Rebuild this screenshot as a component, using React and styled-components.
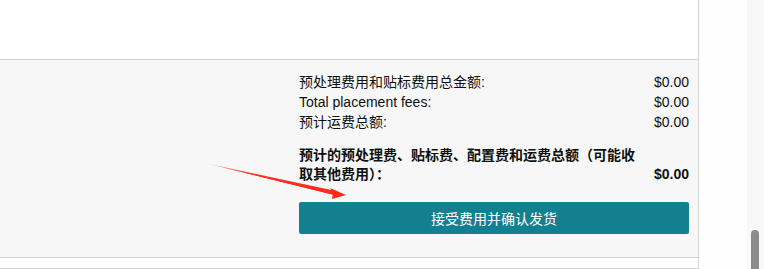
import React from 'react';
import styled, { createGlobalStyle } from 'styled-components';

const GlobalStyle = createGlobalStyle`
	html, body {
		margin: 0;
		padding: 0;
		background: #ffffff;
		overflow: hidden;
	}
	body {
		font-family: "Liberation Sans", "Noto Sans CJK SC", sans-serif;
		color: #0f1111;
	}
`;

const Page = styled.div`
	position: relative;
	display: flex;
	width: 764px;
	height: 269px;
	overflow: hidden;
`;

const Main = styled.div`
	width: 699px;
	display: flex;
	flex-direction: column;
`;

const Gutter = styled.div`
	flex: 1;
	display: flex;
	justify-content: flex-end;
	background: #fefefe;
`;

const Track = styled.div`
	width: 17px;
	background: #f8f8f8;
	display: flex;
	flex-direction: column;
	justify-content: flex-end;
	align-items: center;
`;

const Thumb = styled.div`
	width: 8px;
	height: 39px;
	margin-left: -1px;
	background: #8c8c8c;
	border-radius: 4px 4px 0 0;
`;

const TopCard = styled.div`
	height: 59px;
	background: #ffffff;
	border-right: 1px solid #d5d5d5;
	border-bottom: 1px solid #d5d5d5;
`;

const Summary = styled.div`
	height: 175px;
	background: #f7f7f7;
	border-right: 1px solid #d5d5d5;
	border-bottom: 1px solid #d5d5d5;
	padding: 12px 9px 12px 299px;
	box-sizing: content-box;
	display: flex;
	flex-direction: column;
`;

const Row = styled.div`
	display: flex;
	justify-content: space-between;
	align-items: flex-end;
	font-size: 14px;
	line-height: 20px;
	font-weight: ${p => (p.bold ? 700 : 400)};
	margin-top: ${p => p.gap || 0}px;
`;

const Label = styled.span`
	width: ${p => p.width || 'auto'};
	line-height: ${p => (p.bold ? '19px' : '20px')};
`;

const Amount = styled.span`
	white-space: nowrap;
`;

const Button = styled.button`
	margin-top: 18px;
	height: 32px;
	width: 100%;
	border: none;
	border-radius: 2px;
	background: #13808f;
	color: #ffffff;
	font-family: "Liberation Sans", "Noto Sans CJK SC", sans-serif;
	font-size: 14px;
	cursor: pointer;
`;

const Spacer = styled.div`
	height: 10px;
	background: #ffffff;
	border-right: 1px solid #d5d5d5;
`;

const NextCard = styled.div`
	flex: 1;
	background: #f7f7f7;
	border-top: 1px solid #d5d5d5;
	border-right: 1px solid #d5d5d5;
`;

const Arrow = styled.svg`
	position: absolute;
	left: 0;
	top: 0;
	pointer-events: none;
`;

const fees = [
	{ label: '预处理费用和贴标费用总金额:', amount: '$0.00' },
	{ label: 'Total placement fees:', amount: '$0.00' },
	{ label: '预计运费总额:', amount: '$0.00' },
];

export default function App() {
	return (
		<Page>
			<GlobalStyle />
			<Main>
				<TopCard />
				<Summary>
					{fees.map(f => (
						<Row key={f.label}>
							<Label>{f.label}</Label>
							<Amount>{f.amount}</Amount>
						</Row>
					))}
					<Row bold gap={14}>
						<Label bold width="340px">
							预计的预处理费、贴标费、配置费和运费总额（可能收取其他费用）：
						</Label>
						<Amount>$0.00</Amount>
					</Row>
					<Button>接受费用并确认发货</Button>
				</Summary>
				<Spacer />
				<NextCard />
			</Main>
			<Gutter>
				<Track>
					<Thumb />
				</Track>
			</Gutter>
			<Arrow width="764" height="269" viewBox="0 0 764 269">
				<defs>
					<linearGradient id="arrowFade" x1="205" y1="163" x2="345" y2="197" gradientUnits="userSpaceOnUse">
						<stop offset="0" stopColor="#ff2a1a" stopOpacity="0.1" />
						<stop offset="0.35" stopColor="#ff2a1a" stopOpacity="0.9" />
						<stop offset="1" stopColor="#ff2a1a" />
					</linearGradient>
				</defs>
				<path d="M205 163 L335 192.5 L334 195 Z" fill="url(#arrowFade)" />
				<path d="M205 163 L336 191 L337 195.5 Z" fill="url(#arrowFade)" />
				<path d="M346 195 L330 188 L333 193 L332 199 Z" fill="#ff2a1a" />
			</Arrow>
		</Page>
	);
}
